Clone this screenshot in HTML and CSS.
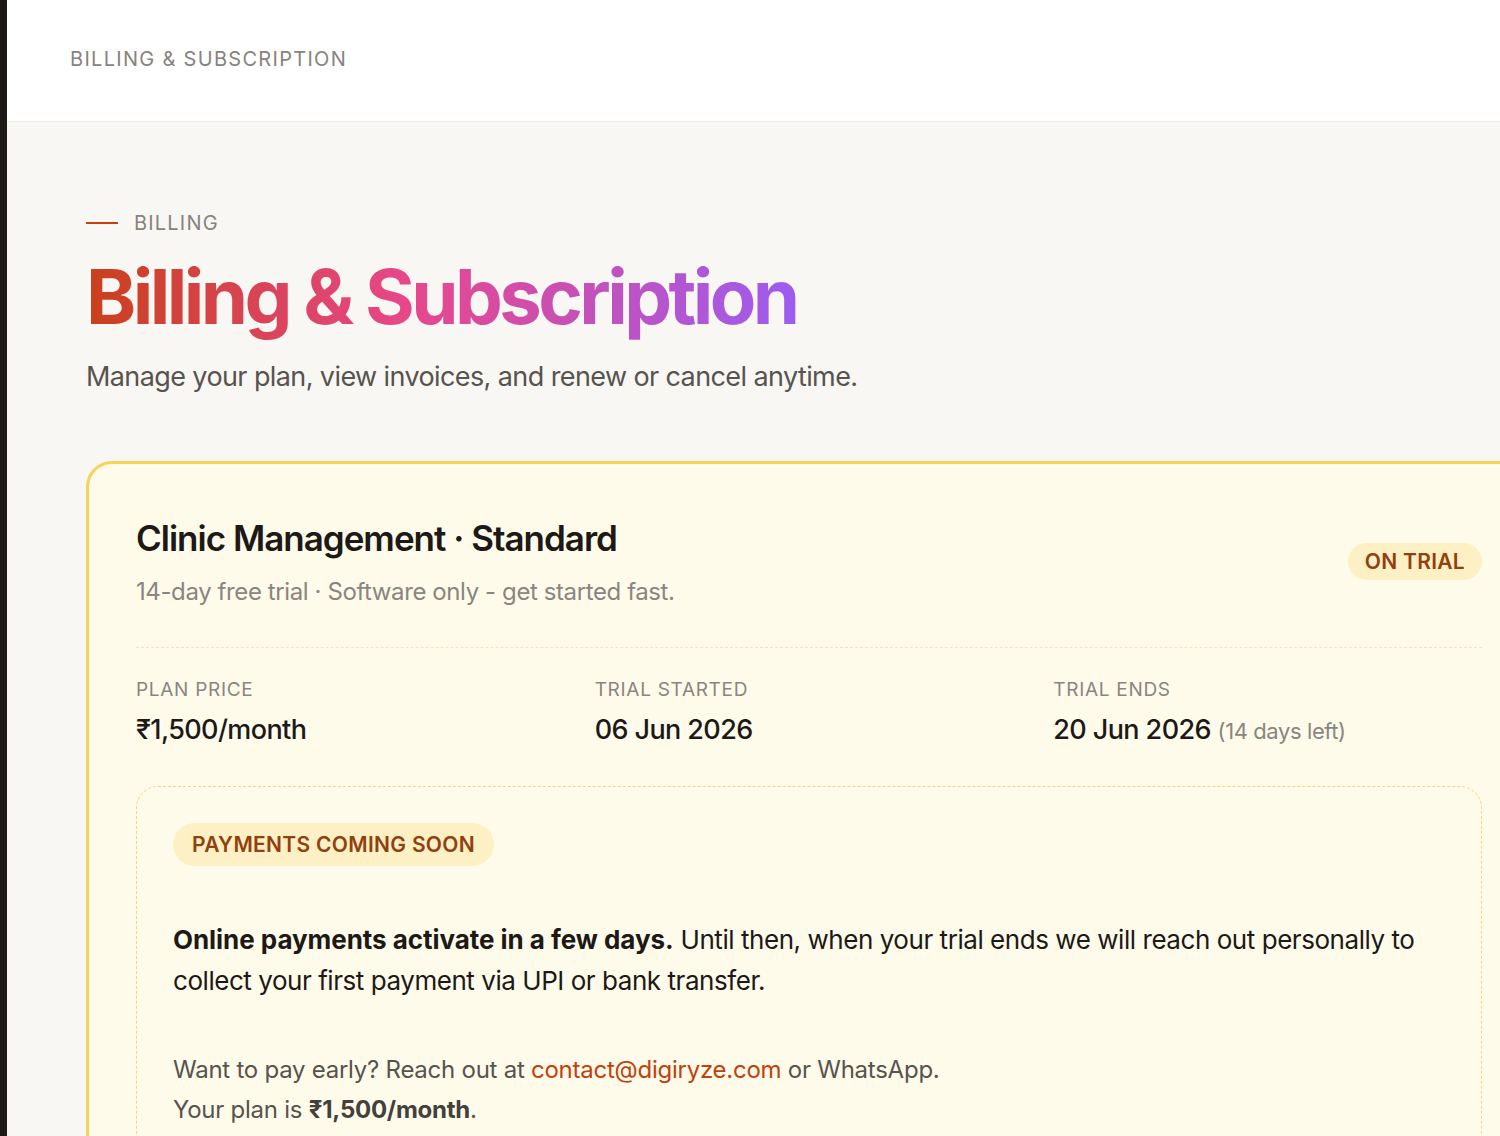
FILE: index.html
```html
<!DOCTYPE html>
<html lang="en">
<head>
    <meta charset="UTF-8">
    <meta name="viewport" content="width=device-width,initial-scale=1.0">
    <title>Billing &amp; Subscription</title>
    <link rel="stylesheet" href="styles.css">
</head>
<body>
    <div class="app">
        <div class="rail"></div>
        <div class="page">
            <header class="topbar">
                <span class="topbar-title">Billing &amp; Subscription</span>
            </header>
            <main class="content">
                <!-- Page heading -->
                <div class="eyebrow">
                    <span class="eyebrow-line"></span>
                    <span>Billing</span>
                </div>
                <h1 class="title">Billing &amp; Subscription</h1>
                <p class="lead">Manage your plan, view invoices, and renew or cancel anytime.</p>

                <!-- Plan card -->
                <section class="plan-card">
                    <div class="plan-head">
                        <div>
                            <h2 class="plan-name">Clinic Management · Standard</h2>
                            <p class="plan-sub">14-day free trial · Software only - get started fast.</p>
                        </div>
                        <span class="pill">On trial</span>
                    </div>

                    <div class="stats">
                        <div class="stat">
                            <div class="stat-label">Plan price</div>
                            <div class="stat-value">₹1,500/month</div>
                        </div>
                        <div class="stat">
                            <div class="stat-label">Trial started</div>
                            <div class="stat-value">06 Jun 2026</div>
                        </div>
                        <div class="stat">
                            <div class="stat-label">Trial ends</div>
                            <div class="stat-value">20 Jun 2026 <span class="muted">(14 days left)</span></div>
                        </div>
                    </div>

                    <div class="notice">
                        <span class="pill pill-lg">Payments coming soon</span>
                        <p class="notice-text"><strong>Online payments activate in a few days.</strong> Until then, when your trial ends we will reach out personally to collect your first payment via UPI or bank transfer.</p>
                        <p class="notice-meta">Want to pay early? Reach out at <a href="mailto:contact@digiryze.com">contact@digiryze.com</a> or WhatsApp.<br>Your plan is <strong>₹1,500/month</strong>.</p>
                    </div>
                </section>
            </main>
        </div>
    </div>
</body>
</html>
```

FILE: styles.css
```css
html, body {
    margin: 0;
    overflow: hidden;
}
body {
    font-family: Inter, "Noto Sans", sans-serif;
    background: #f9f7f4;
    color: #1c1917;
}
.app {
    display: flex;
    height: 1136px;
}
.rail {
    width: 7px;
    flex: none;
    background: #1c1917;
}
.page {
    flex: 1;
    min-width: 0;
}
.topbar {
    height: 122px;
    background: #fff;
    border-bottom: 1px solid #ebe7e1;
    display: flex;
    align-items: center;
    padding-left: 63px;
    box-sizing: border-box;
}
.topbar-title {
    font-size: 20px;
    letter-spacing: 1.3px;
    text-transform: uppercase;
    color: #87837e;
    margin-top: -4px;
}
.content {
    padding: 89px 0 0 79px;
}
.eyebrow {
    display: flex;
    align-items: center;
    gap: 16px;
    font-size: 20px;
    letter-spacing: 1.2px;
    text-transform: uppercase;
    color: #87837e;
}
.eyebrow-line {
    width: 32px;
    height: 2px;
    background: #c2410c;
}
.title {
    margin: 16px 0 0;
    font-size: 76px;
    font-weight: 700;
    letter-spacing: -3.6px;
    line-height: 1.2;
    background: linear-gradient(90deg, #c9401c 0%, #e8478a 45%, #9b5cf2 100%);
    -webkit-background-clip: text;
    background-clip: text;
    color: transparent;
    width: max-content;
    padding-right: 4px;
}
.lead {
    margin: 18px 0 0;
    font-size: 27px;
    letter-spacing: -0.6px;
    color: #57534e;
}
.plan-card {
    margin-top: 68px;
    width: 1446px;
    box-sizing: border-box;
    border: 3px solid #f8d25c;
    border-radius: 26px;
    background: #fefbea;
    padding: 53px 47px 40px;
}
.plan-head {
    display: flex;
    justify-content: space-between;
    align-items: center;
    padding-bottom: 41px;
    border-bottom: 1.5px dashed #ece5cd;
}
.plan-name {
    margin: 0;
    font-size: 35px;
    font-weight: 600;
    letter-spacing: -1px;
}
.plan-sub {
    margin: 18px 0 0;
    font-size: 24px;
    letter-spacing: -0.4px;
    color: #8a8580;
}
.pill {
    display: inline-block;
    background: #fdf0c4;
    color: #92400e;
    font-size: 21px;
    font-weight: 600;
    letter-spacing: 0.3px;
    text-transform: uppercase;
    padding: 6px 17px;
    border-radius: 999px;
}
.stats {
    display: grid;
    grid-template-columns: repeat(3, 1fr);
    column-gap: 30px;
    padding-top: 30px;
}
.stat-label {
    font-size: 19px;
    letter-spacing: 0.7px;
    text-transform: uppercase;
    color: #8a8580;
}
.stat-value {
    margin-top: 12px;
    font-size: 27px;
    font-weight: 500;
    letter-spacing: -0.6px;
}
.muted {
    font-size: 22px;
    font-weight: 400;
    letter-spacing: -0.4px;
    color: #8a8580;
}
.notice {
    margin-top: 40px;
    border: 1.5px dashed #f3d77a;
    border-radius: 22px;
    padding: 36px 36px 30px;
}
.pill-lg {
    padding: 9px 19px;
    letter-spacing: 0.3px;
}
.notice-text {
    margin: 53px 0 0;
    font-size: 26px;
    line-height: 41px;
    letter-spacing: -0.45px;
}
.notice-text strong {
    font-weight: 700;
    letter-spacing: -0.05px;
}
.notice-meta {
    margin: 49px 0 0;
    font-size: 24px;
    line-height: 40px;
    letter-spacing: -0.25px;
    color: #57534e;
}
.notice-meta a {
    color: #c2410c;
    text-decoration: none;
}
.notice-meta strong {
    color: #44403c;
}
```
